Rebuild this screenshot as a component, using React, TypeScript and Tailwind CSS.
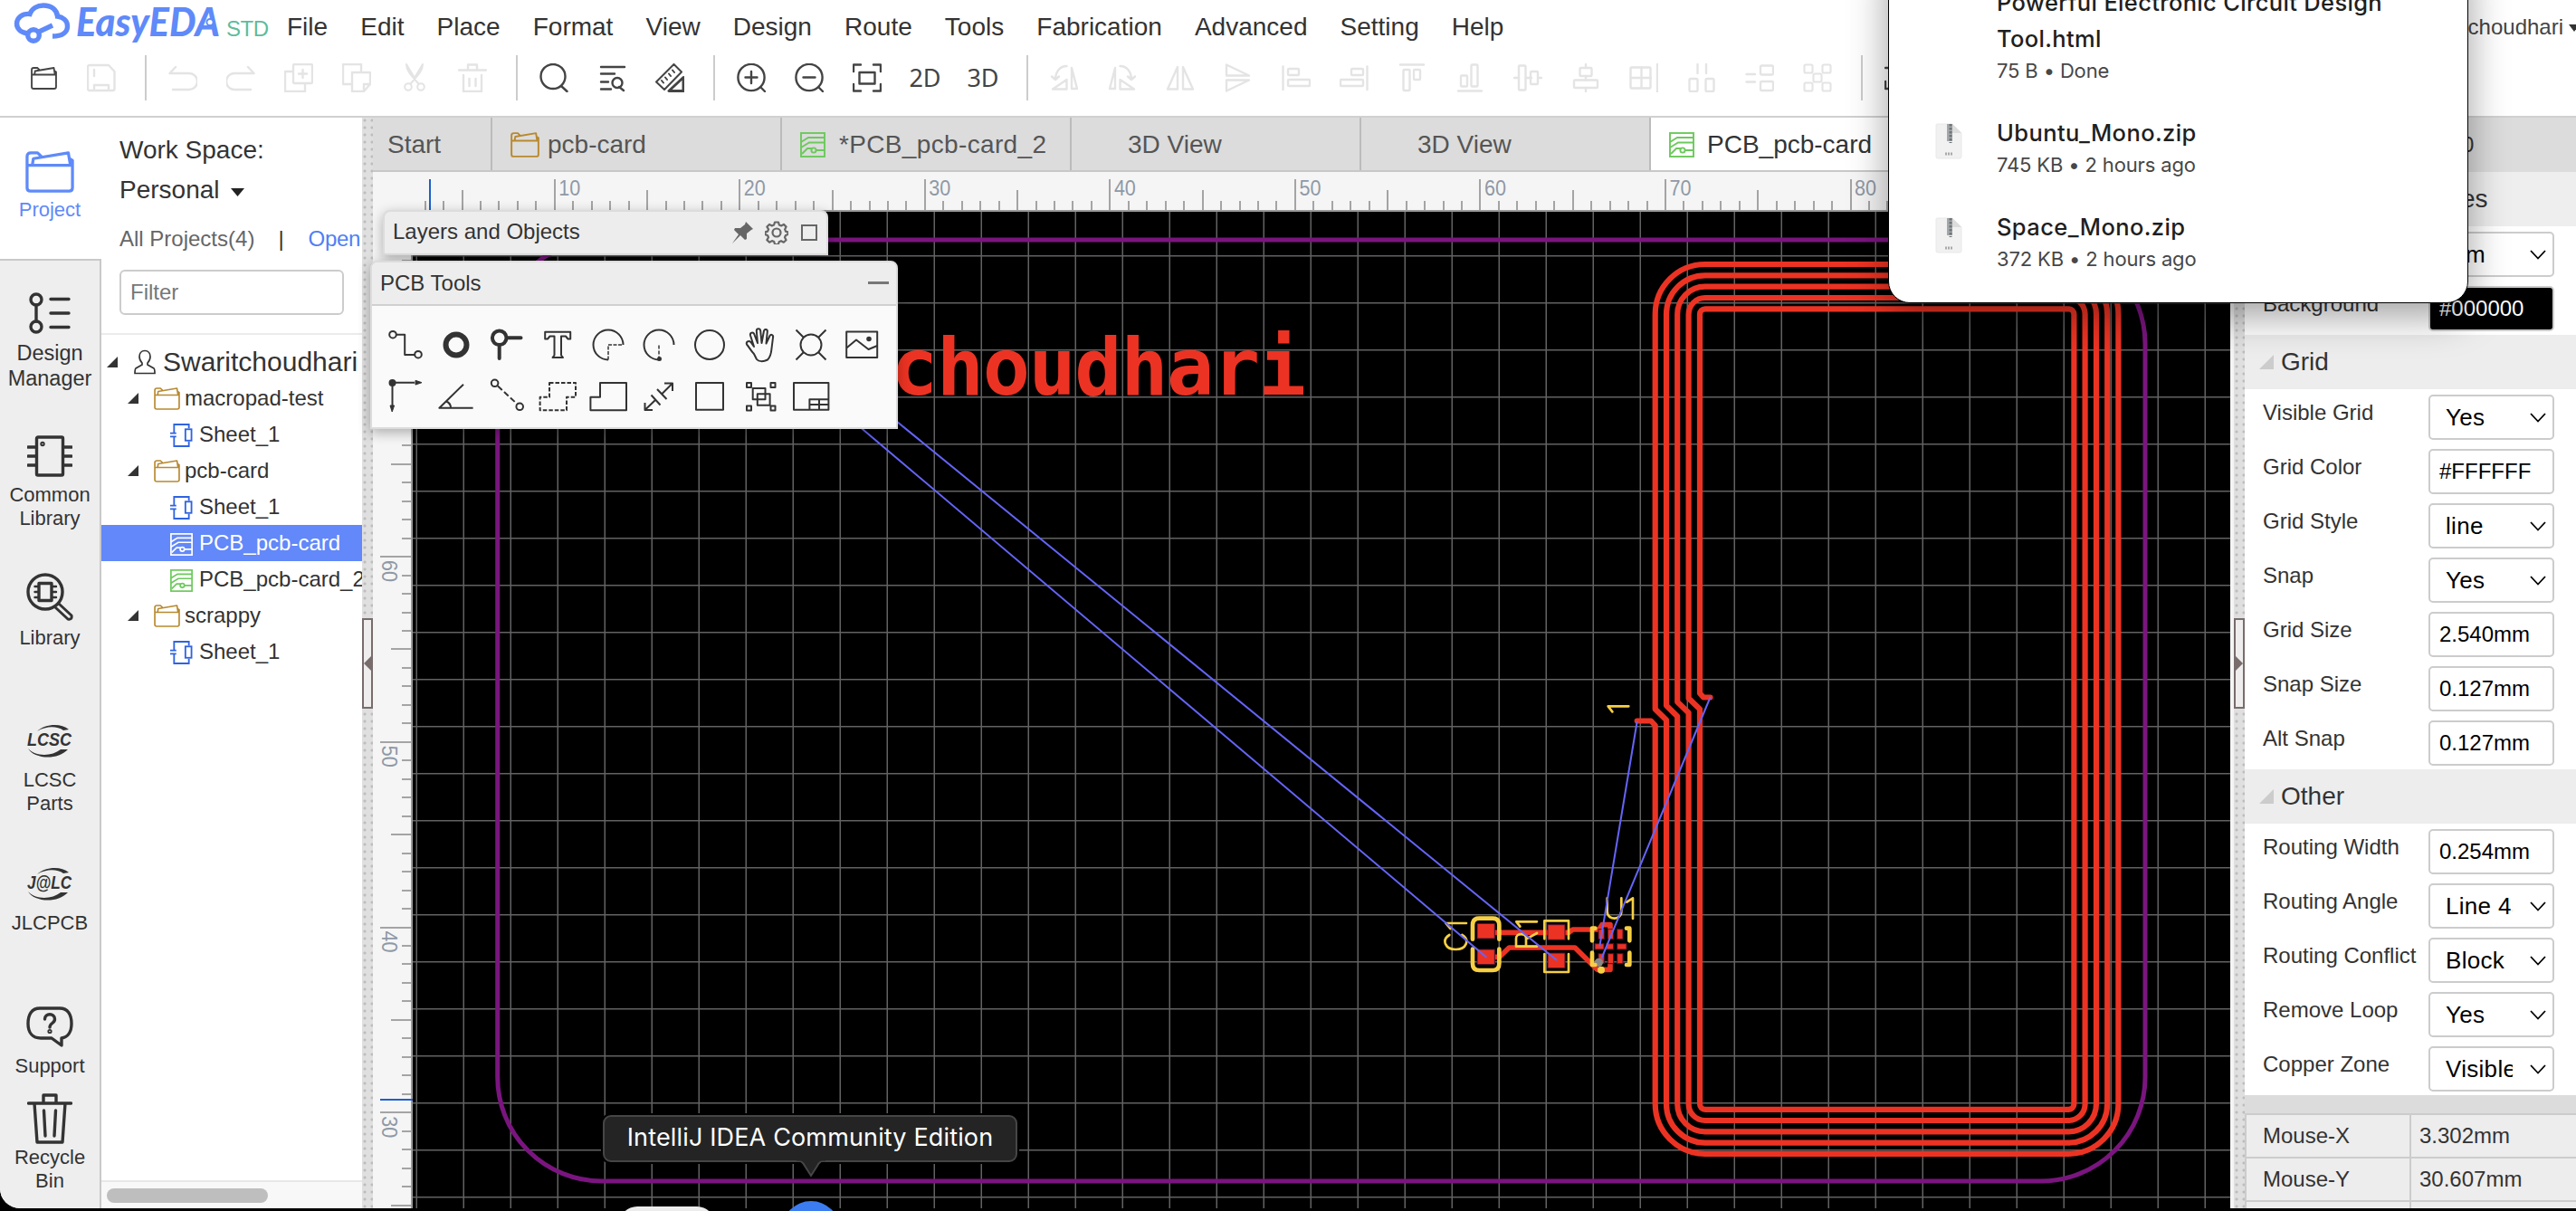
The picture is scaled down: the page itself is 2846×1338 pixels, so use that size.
import React from "react";

type IconProps = { className?: string };

const SANS = "font-['Liberation_Sans',Arial,sans-serif]";

/* ---------- shared small icons ---------- */

function Folder({ className = "", sw = 1.6 }: IconProps & { sw?: number }) {
  return (
    <svg className={className} viewBox="0 0 28 25" fill="none" stroke="currentColor" strokeWidth={sw} strokeLinejoin="round" preserveAspectRatio="none">
      <path d="M1 8.5V3.2Q1 1 3.2 1H7l2.2 2.2M1 8.5h26M4 8.3 4.6 4.5 24.6 1l1.2 7.3M25.6 4.6 27 5.6V22q0 2-2 2H3q-2 0-2-2V8.5" />
    </svg>
  );
}

function PcbIcon({ className = "" }: IconProps) {
  return (
    <svg className={className} viewBox="0 0 28 28" fill="none" stroke="currentColor" strokeWidth="1.9">
      <rect x="1" y="1" width="26" height="26" />
      <path d="M1 11 9 6H27M1 17 10 11.5H27M2 24 8 18H13M17 20H27" />
      <circle cx="15" cy="20" r="2.6" />
    </svg>
  );
}

function SheetIcon({ className = "" }: IconProps) {
  return (
    <svg className={className} viewBox="0 0 26 28" fill="none" stroke="currentColor" strokeWidth="1.9">
      <path d="M4.500 9V1.500H21.500V6M4.500 18.500V26.500H21.500V21M0 11.500H7M0 15.500H7M4.500 9V11.500M4.500 15.500V19" />
      <rect x="17.500" y="7" width="7" height="13" />
    </svg>
  );
}

function Caret({ className = "" }: IconProps) {
  return (
    <svg className={className} viewBox="0 0 12 12" fill="currentColor">
      <path d="M0 12H12V0Z" />
    </svg>
  );
}

/* ---------- header ---------- */

function Logo() {
  return (
    <svg className="absolute left-0 top-0" width="310" height="56" viewBox="0 0 310 56" fill="none">
      <g stroke="#5f8af9" strokeWidth="5.4" strokeLinecap="butt">
        <path d="M31 37C23 36 18.500 32 18.500 26c0-6 6-11.500 14.500-10.500C35 9.500 41 6 48 6c9 0 15 5 15.500 12 6 .8 11 4.600 11 11 0 6-5 11-16.500 11" />
        <circle cx="37" cy="39" r="6.300" />
        <path d="M41 36 58 28" />
      </g>
      <text x="84" y="40" fill="#5f8af9" fontFamily="Lato, sans-serif" fontWeight="900" fontStyle="italic" fontSize="43" textLength="159" lengthAdjust="spacingAndGlyphs">
        EasyEDA
      </text>
      <circle cx="232" cy="24.500" r="3.600" fill="#fff" stroke="#5f8af9" strokeWidth="2" />
      <text x="250" y="40" fill="#5cbd9b" fontFamily="'Liberation Sans', sans-serif" fontSize="24" textLength="47">
        STD
      </text>
    </svg>
  );
}

const MENU = ["File", "Edit", "Place", "Format", "View", "Design", "Route", "Tools", "Fabrication", "Advanced", "Setting", "Help"];

function Tool({ children, dim = false, w = 2.4 }: { children: React.ReactNode; dim?: boolean; w?: number }) {
  return (
    <div className={"flex w-[64px] shrink-0 items-center justify-center " + (dim ? "text-[#e4e4e4]" : "text-[#444]")}>
      <svg width="32" height="32" viewBox="0 0 32 32" fill="none" stroke="currentColor" strokeWidth={w} strokeLinecap="round" strokeLinejoin="round">
        {children}
      </svg>
    </div>
  );
}

function Sep() {
  return (
    <div className="h-[50px] w-[26px] shrink-0 pl-[16px]">
      <div className="h-full w-[2px] bg-[#ccc]" />
    </div>
  );
}

function Toolbar() {
  return (
    <div className="flex h-[56px] items-center overflow-hidden pl-[16px]">
      <div className="flex w-[64px] justify-center text-[#444]">
        <Folder className="h-[25px] w-[29px]" sw={1.8} />
      </div>
      <Tool dim>
        <path d="M3 2H24L30.500 9V28q0 2-2 2H3q-2 0-2-2V4q0-2 2-2ZM8 7v7M8 30V24H24v6" />
      </Tool>
      <Sep />
      <Tool dim><path d="M8 4 1.500 11H23a9 9 0 0 1 0 18H5" /></Tool>
      <Tool dim><path d="M24 4l6.500 7H9a9 9 0 0 0 0 18H27" /></Tool>
      <Tool dim>
        <rect x="10" y="1" width="21" height="21" rx="1.500" />
        <path d="M9 9H1V31H23V23M20.500 7v9M16 11.500h9" />
      </Tool>
      <Tool dim>
        <path d="M10 23H1V1H21V9M11 10H31V23L24 31H11ZM24 31V23H31" />
      </Tool>
      <Tool dim w={2}>
        <path d="M7 1C7 8 12 13 20 22M25 1C25 8 20 13 12 22M7 1l9 15M25 1 16 16" />
        <circle cx="9" cy="26" r="3.800" />
        <circle cx="23" cy="26" r="3.800" />
      </Tool>
      <Tool dim>
        <path d="M1 7.500H31M11 7V1.500H21V7M6 13V31H26V13M12.500 17v8M19.500 17v8" />
      </Tool>
      <Sep />
      <Tool><circle cx="15" cy="14.500" r="13.500" /><path d="M24 25l6.500 6" /></Tool>
      <Tool>
        <path d="M4 4H30M4 11.500H19M4 20.500H12M4 28.500H15M24 26l5 4" />
        <circle cx="22" cy="21.500" r="5.500" />
      </Tool>
      <Tool w={2}>
        <path d="M1 20.500 20.500 1 29 9.500 10 29ZM7 19l2 2.500M11 15.500l2 2.500M15 11.500l2 2.500M19 7.500l2 2.500" />
        <path d="M15 30.500H31V15.500Z" strokeWidth="3" />
      </Tool>
      <Sep />
      <Tool><circle cx="16" cy="15.500" r="14.600" /><path d="M26.500 26.500 31 31M16 9v13M9.500 15.500h13" /></Tool>
      <Tool><circle cx="16" cy="15.500" r="14.600" /><path d="M26.500 26.500 31 31M9.500 15.500h13" /></Tool>
      <Tool>
        <path d="M1 9V1.500H9M23 1.500h8V9M31 23v7.500H23M9 30.500H1V23" />
        <rect x="7.500" y="10" width="17" height="12.500" />
      </Tool>
      <div className="w-[64px] text-center font-['Noto_Sans',sans-serif] text-[27px] leading-[40px] text-[#444]">2D</div>
      <div className="w-[64px] text-center font-['Noto_Sans',sans-serif] text-[27px] leading-[40px] text-[#444]">3D</div>
      <Sep />
      <Tool dim>
        <path d="M18.500 3C11 3 6.500 9 6 17M2 14.500 6 18l4-3.500M24 5v23h6ZM18.500 18v10.500H3Z" />
      </Tool>
      <Tool dim>
        <path d="M13.500 3C21 3 25.500 9 26 17M22 14.500l4 3.500 4-3.500M8 5v23H2ZM13.500 18v10.500H29Z" />
      </Tool>
      <Tool dim><path d="M13 4V28.500H2ZM19 4V28.500H30Z" /></Tool>
      <Tool dim><path d="M3 1.500V13.500H28ZM3 30.500V18.500H28Z" /></Tool>
      <Tool dim>
        <path d="M1.500 3.500V29" /><rect x="7" y="6" width="12" height="7" rx="1" /><rect x="7" y="18" width="24" height="7" rx="1" />
      </Tool>
      <Tool dim>
        <path d="M30.500 3.500V29" /><rect x="13" y="6" width="13" height="7" rx="1" /><rect x="1" y="18" width="25" height="7" rx="1" />
      </Tool>
      <Tool dim>
        <path d="M3 1.500H29" /><rect x="6.500" y="7" width="7" height="23" rx="1" /><rect x="18" y="7" width="7" height="11" rx="1" />
      </Tool>
      <Tool dim>
        <path d="M3 30.500H29" /><rect x="6" y="13.500" width="7" height="12" rx="1" /><rect x="17.500" y="1.500" width="7" height="24" rx="1" />
      </Tool>
      <Tool dim>
        <path d="M1 16H6M13.500 16H20M27 16H31" /><rect x="6" y="2.500" width="7.500" height="27" rx="1" /><rect x="19" y="9" width="8" height="14" rx="1" />
      </Tool>
      <Tool dim>
        <path d="M16 1V5M16 14V18.500M16 27V31" /><rect x="9.500" y="5" width="13" height="9" rx="1" /><rect x="3" y="18.500" width="26" height="8.500" rx="1" />
      </Tool>
      <Tool dim>
        <path d="M31 1V31M13.500 4.500V27.500M1.500 16H24" /><rect x="1.500" y="4.500" width="22" height="23" rx="1" />
      </Tool>
      <Tool dim>
        <path d="M11.500 1V11M21 1V11" /><rect x="2.500" y="17" width="9" height="14" rx="1.500" /><rect x="20.500" y="17" width="9" height="14" rx="1.500" />
      </Tool>
      <Tool dim>
        <path d="M1.500 12H11M1.500 20.500H11" /><rect x="17" y="2.500" width="14" height="10" rx="1.500" /><rect x="17" y="20" width="14" height="10" rx="1.500" />
      </Tool>
      <Tool dim w={2.1}>
        <rect x="1.500" y="1.500" width="9" height="9" rx="1.500" /><rect x="21.500" y="1.500" width="9" height="9" rx="1.500" />
        <rect x="11.500" y="11.500" width="9" height="9" rx="1.500" />
        <rect x="1.500" y="21.500" width="9" height="9" rx="1.500" /><rect x="21.500" y="21.500" width="9" height="9" rx="1.500" />
      </Tool>
      <Sep />
      <Tool><path d="M1 5H8M1 20V28H8" /></Tool>
    </div>
  );
}

/* ---------- left navigation ---------- */

function NavItem({ icon, lines, className }: { icon: React.ReactNode; lines: string[]; className: string }) {
  return (
    <div className={"flex shrink-0 flex-col items-center " + className}>
      {icon}
      {lines.map((l) => (
        <div key={l} className="whitespace-nowrap">{l}</div>
      ))}
    </div>
  );
}

function SwooshLogo({ text, className = "" }: { text: string; className?: string }) {
  return (
    <svg className={className} width="52" height="40" viewBox="0 0 52 40">
      <path d="M12 9C20 1 38-1 47 7l-6 1C34 3 22 3 12 9ZM2 28c6 11 32 14 44 1l-8 0C28 37 10 37 2 28Z" fill="#333" />
      <text x="1" y="25" textLength="49" lengthAdjust="spacingAndGlyphs" fontFamily="'Liberation Sans', sans-serif" fontWeight="bold" fontStyle="italic" fontSize="20" fill="#333">
        {text}
      </text>
    </svg>
  );
}

function LeftNav() {
  const stroke = { fill: "none", stroke: "currentColor", strokeWidth: 3.4, strokeLinejoin: "round" as const, strokeLinecap: "round" as const };
  return (
    <div className="flex w-[112px] shrink-0 flex-col bg-[#eee] text-[22px] leading-[26px] text-[#333]">
      <NavItem
        className="h-[156px] bg-white pr-[2px] pt-[37px] text-[#5f8af9]"
        lines={["Project"]}
        icon={<Folder className="mb-[6px] h-[46px] w-[54px]" sw={1.7} />}
      />
      <div className="flex flex-1 flex-col border-r-2 border-t-2 border-[#c9c9c9]">
        <NavItem
          className="h-[193px] pt-[35px] text-[23.5px] leading-[28px]"
          lines={["Design", "Manager"]}
          icon={
            <svg className="mb-[7px]" width="46" height="46" viewBox="0 0 46 46" {...stroke}>
              <circle cx="8" cy="8" r="6" /><circle cx="8" cy="38" r="6" />
              <path d="M8 14V32M24 7.500H44M24 23H44M24 38.500H44" />
            </svg>
          }
        />
        <NavItem
          className="h-[152px]"
          lines={["Common", "Library"]}
          icon={
            <svg className="mb-[7px] shrink-0" width="50" height="46" viewBox="0 0 50 46" {...stroke}>
              <rect x="10.500" y="2" width="29" height="42" rx="1.500" />
              <path d="M1 13H9M1 23H9M1 33H9M41 13H49M41 23H49M41 33H49" /><circle cx="17" cy="9.500" r="1" />
            </svg>
          }
        />
        <NavItem
          className="h-[166px]"
          lines={["Library"]}
          icon={
            <svg className="mb-[5px] shrink-0" width="52" height="54" viewBox="0 0 52 54" {...stroke}>
              <circle cx="21" cy="21" r="19" />
              <rect x="14" y="11.500" width="14" height="19" />
              <path d="M9.500 15H13M9.500 21H13M9.500 27H13M29 15H33M29 21H33M29 27H33" strokeWidth="2.400" />
              <path d="M36 34 50 47q1 5-4 4L32 38" strokeWidth="3" />
            </svg>
          }
        />
        <NavItem className="h-[158px]" lines={["LCSC", "Parts"]} icon={<SwooshLogo text="LCSC" className="mb-[10px] shrink-0" />} />
        <NavItem className="h-[155px]" lines={["JLCPCB"]} icon={<SwooshLogo text="J@LC" className="mb-[10px] shrink-0" />} />
        <NavItem
          className="h-[96px]"
          lines={["Support"]}
          icon={
            <svg className="mb-[7px] shrink-0" width="52" height="46" viewBox="0 0 52 46" {...stroke}>
              <path d="M39 43V35C46 34 50 28 50 19 50 9 46 2 37 2H15C6 2 2 9 2 19s5 16 14 16H28Z" />
              <path d="M20.500 14c0-7 11-7 11 0 0 5-5.500 4-5.500 9" /><circle cx="26" cy="27.500" r=".9" />
            </svg>
          }
        />
        <NavItem
          className=""
          lines={["Recycle", "Bin"]}
          icon={
            <svg className="mb-[2px] shrink-0" width="50" height="56" viewBox="0 0 50 56" {...stroke}>
              <path d="M1.500 11H48.500M18 10V2H32V10M8 11 11 54H39L42 11M18.500 19 20 47M31.500 19 30 47" />
            </svg>
          }
        />
      </div>
    </div>
  );
}

/* ---------- project tree ---------- */

function FolderRow({ name }: { name: string }) {
  return (
    <div className="flex h-[40px] items-center pb-px pl-[29px]">
      <Caret className="h-[12px] w-[12px] text-[#333]" />
      <Folder className="ml-[17px] mt-[2px] h-[25px] w-[29px] text-[#b8892f]" />
      <span className="ml-[5px]">{name}</span>
    </div>
  );
}

function FileRow({ name, kind, selected = false }: { name: string; kind: "sheet" | "pcb"; selected?: boolean }) {
  return (
    <div className={"flex h-[40px] items-center whitespace-nowrap pb-px pl-[76px] " + (selected ? "bg-[#6288f9] text-white" : "")}>
      {kind === "sheet" ? (
        <SheetIcon className="mt-[3px] h-[28px] w-[25px] shrink-0 text-[#2f63e0]" />
      ) : (
        <PcbIcon className={"mt-[3px] h-[25px] w-[25px] shrink-0 " + (selected ? "text-white" : "text-[#6cc95c]")} />
      )}
      <span className="ml-[7px]">{name}</span>
    </div>
  );
}

function ProjectPanel() {
  return (
    <div className="flex w-[288px] shrink-0 flex-col overflow-hidden bg-white text-[24px] text-[#333]">
      <div className="mt-[14px] pl-[20px] text-[28px] leading-[44px]">Work Space:</div>
      <div className="flex items-center pl-[20px] text-[28px] leading-[44px]">
        Personal
        <svg className="ml-[12px] mt-[5px]" width="15" height="9" viewBox="0 0 15 9"><path d="M0 0H15L7.500 9Z" fill="#222" /></svg>
      </div>
      <div className="mt-[17px] flex whitespace-nowrap pl-[20px] leading-[30px] text-[#666]">
        All Projects(4)
        <span className="ml-[26px] text-[#333]">|</span>
        <span className="ml-[27px] tracking-[-0.3px] text-[#4f80f5]">Open</span>
      </div>
      <div className="ml-[20px] mt-[19px] flex h-[50px] w-[248px] shrink-0 items-center rounded-[6px] border-2 border-[#ccc] pl-[10px] text-[#777]">Filter</div>
      <div className="mt-[20px] h-[2px] shrink-0 bg-[#ebebeb]" />
      <div className="mt-[10px]">
        <div className="flex h-[40px] items-center whitespace-nowrap pb-px pl-[6px] text-[30px]">
          <Caret className="h-[12px] w-[12px] shrink-0" />
          <svg className="ml-[18px] shrink-0" width="24" height="28" viewBox="0 0 24 28" fill="none" stroke="#333" strokeWidth="1.700">
            <path d="M12 1.500c4 0 6 3 6 6.500 0 3-1.500 5.500-3 7v2l7 4q1 1 1 5.500H1q0-4.500 1-5.500l7-4V15C7.500 13.500 6 11 6 8c0-3.500 2-6.500 6-6.500Z" />
          </svg>
          <span className="ml-[8px]">Swaritchoudhari</span>
        </div>
        <FolderRow name="macropad-test" />
        <FileRow name="Sheet_1" kind="sheet" />
        <FolderRow name="pcb-card" />
        <FileRow name="Sheet_1" kind="sheet" />
        <FileRow name="PCB_pcb-card" kind="pcb" selected />
        <FileRow name="PCB_pcb-card_2" kind="pcb" />
        <FolderRow name="scrappy" />
        <FileRow name="Sheet_1" kind="sheet" />
      </div>
      <div className="mt-auto flex h-[31px] items-center border-t-2 border-[#e8e8e8] bg-[#f8f8f8] pl-[6px]">
        <div className="h-[16px] w-[178px] rounded-full bg-[#bebebe]" />
      </div>
    </div>
  );
}

function Splitter({ dir }: { dir: "left" | "right" }) {
  return (
    <div className="flex w-[12px] shrink-0 flex-col bg-[#dfdfdf] bg-[radial-gradient(circle_at_3px_3px,#bdbdbd_1.3px,transparent_1.8px)] bg-[size:8px_8px] pt-[553px]">
      <div className="flex h-[100px] w-[12px] items-center justify-center border-2 border-[#786c6c] bg-[#efeded]">
        <svg width="8" height="16" viewBox="0 0 8 16" className="shrink-0">
          <path d={dir === "left" ? "M8 0V16L0 8Z" : "M0 0V16L8 8Z"} fill="#786c6c" />
        </svg>
      </div>
    </div>
  );
}

/* ---------- tabs, rulers, canvas ---------- */

function Tabs() {
  const base = "flex h-full w-[320px] shrink-0 items-center border-r-2 border-[#bbb] pl-[20px] pt-px text-[#555]";
  return (
    <div className="flex h-[60px] shrink-0 border-b-2 border-[#c8c8c8] bg-[#dcdcdc] text-[28px]">
      <div className="flex h-full w-[132px] shrink-0 items-center border-r-2 border-[#bbb] pl-[16px] pt-px text-[#555]">Start</div>
      <div className={base}><Folder className="mr-[9px] h-[28px] w-[32px] text-[#b8892f]" sw={1.7} />pcb-card</div>
      <div className={base}><PcbIcon className="mr-[15px] h-[28px] w-[28px] text-[#6cc95c]" /><span className="tracking-[0.35px]">*PCB_pcb-card_2</span></div>
      <div className={base}><span className="ml-[42px]">3D View</span></div>
      <div className={base}><span className="ml-[42px]">3D View</span></div>
      <div className="flex h-full w-[642px] items-center bg-white pl-[20px] pt-px text-[#333]">
        <PcbIcon className="mr-[14px] h-[28px] w-[28px] text-[#6cc95c]" />PCB_pcb-card
      </div>
    </div>
  );
}

const hx = (v: number) => 612.8 + (v - 10) * 20.453;
const vy = (v: number) => 1229.2 - (v - 30) * 20.47;

function HRuler() {
  const vals = Array.from({ length: 97 }, (_, i) => i + 3);
  return (
    <svg className="block shrink-0" width="2052" height="44" viewBox="412 190 2052 44">
      <rect x="412" y="190" width="2052" height="44" fill="#f5f5f5" />
      {vals.map((v) => (
        <rect key={v} x={Math.round(hx(v)) - 1} y={v % 10 === 0 ? 198 : v % 5 === 0 ? 210 : 222} width="2" height={v % 10 === 0 ? 34 : v % 5 === 0 ? 22 : 10} fill="#a4a4a4" />
      ))}
      {vals.filter((v) => v % 10 === 0).map((v) => (
        <text key={v} x={hx(v) + 4.5} y="216" fontSize="23" fill="#8f99a6" fontFamily="'Liberation Sans', sans-serif" textLength="24" lengthAdjust="spacingAndGlyphs">{v}</text>
      ))}
      <rect x="456" y="232" width="2008" height="2" fill="#999" />
      <rect x="474" y="198" width="2" height="34" fill="#1d5fcb" />
    </svg>
  );
}

function VRuler() {
  const vals = Array.from({ length: 53 }, (_, i) => i + 25);
  return (
    <svg className="block shrink-0" width="44" height="1101" viewBox="412 234 44 1101">
      <rect x="412" y="234" width="44" height="1101" fill="#f5f5f5" />
      {vals.map((v) => {
        const len = v % 10 === 0 ? 34 : v % 5 === 0 ? 22 : 10;
        return <rect key={v} x={454 - len} y={Math.round(vy(v)) - 1} width={len} height="2" fill="#a4a4a4" />;
      })}
      {[30, 40, 50, 60, 70].map((v) => (
        <text key={v} transform={`translate(422 ${vy(v) + 4}) rotate(90)`} fontSize="23" fill="#8f99a6" fontFamily="'Liberation Sans', sans-serif" textLength="24" lengthAdjust="spacingAndGlyphs">{v}</text>
      ))}
      <rect x="454" y="234" width="2" height="1101" fill="#999" />
      <rect x="420" y="1214" width="36" height="2" fill="#1d5fcb" />
    </svg>
  );
}

const COIL = (() => {
  const L = [1828.7, 1841, 1853.2, 1865.6, 1878];
  const R = [2340.4, 2328.2, 2316, 2303.6, 2291.4];
  const T = [292, 304.3, 316.7, 329, 341.3];
  const B = [1274.8, 1262.6, 1250.3, 1238, 1225.8];
  let d = "M1808.7 796.5H1824L1828.7 801.5";
  for (let i = 0; i < 5; i++) {
    const r = 6 + (4 - i) * 12.3;
    d += `V${B[i] - r}A${r} ${r} 0 0 0 ${L[i] + r} ${B[i]}H${R[i] - r}A${r} ${r} 0 0 0 ${R[i]} ${B[i] - r}V${T[i] + r}A${r} ${r} 0 0 0 ${R[i] - r} ${T[i]}H${L[i] + r}A${r} ${r} 0 0 0 ${L[i]} ${T[i] + r}`;
    if (i < 4) d += `V${783.5 - i * 4}L${L[i + 1]} ${795.5 - i * 4}`;
  }
  return d + "V766L1882 770.5H1889.500";
})();

function Board() {
  return (
    <svg className="block shrink-0 bg-black" width="2008" height="1101" viewBox="456 234 2008 1101" fill="none">
      <g fill="#626262">
        {Array.from({ length: 39 }, (_, i) => <rect key={i} x={459.5 + i * 52} y="234" width="1.500" height="1101" />)}
        {Array.from({ length: 21 }, (_, i) => <rect key={i} x="456" y={282 + i * 52} width="2008" height="1.500" />)}
      </g>
      <rect x="549.700" y="265" width="1820.300" height="1040" rx="115" stroke="#7a157f" strokeWidth="5" />
      <path d={COIL} stroke="#ec3323" strokeWidth="6.200" strokeLinecap="round" strokeLinejoin="round" />
      <text x="984" y="436.700" transform="translate(0 -1)" fill="#ec3323" fontFamily="'DejaVu Sans Mono', monospace" fontWeight="bold" fontSize="87" textLength="459">choudhari</text>
      <g transform="translate(1560 740) scale(.33333)">
        <path d="M245 871H520L533 861H620L630 845H657V880M245 952H290L322 921H540L614 994H657V960" stroke="#ec3323" strokeWidth="17" strokeLinejoin="round" />
        <g fill="#ec3323" stroke="#4a1030" strokeWidth="3">
          <rect x="216" y="841" width="58" height="50" /><rect x="216" y="927" width="58" height="50" />
          <rect x="450" y="845" width="57" height="50" /><rect x="450" y="939" width="57" height="50" />
          {[860, 941].map((y) => [618, 649, 680].map((x) => <rect key={x + "-" + y} x={x} y={y} width="19" height="33" />))}
          <rect x="606" y="908" width="30" height="19" /><rect x="644" y="908" width="24" height="19" /><rect x="680" y="908" width="31" height="19" />
        </g>
        <circle cx="619" cy="970" r="14" fill="#888" />
        <g stroke="#f6cf45" strokeLinecap="round" strokeLinejoin="round">
          <path d="M201 893V846Q201 824 223 824H267Q289 824 289 846V893M201 926V974Q201 996 223 996H267Q289 996 289 974V926" strokeWidth="14" />
          <path d="M439 892V832H519V892M439 942V1002H519V942" strokeWidth="8" />
          <path d="M597 898V857H607M721 898V857H711M597 938V978H607M721 938V978H711" strokeWidth="14" />
          <path d="M124 879C97 896 110 927 145 927S193 896 166 879M180 840H112L127 858M345 917H414M345 917V890C345 872 378 872 378 890V917M378 893 414 873M414 835H346L358 851M647 757V800C647 832 694 832 694 800V757M732 825V757L712 770M718 121H650L664 139" strokeWidth="8" />
        </g>
        <circle cx="627" cy="995" r="12" fill="#f6cf45" />
      </g>
      <path d="M920 446.300 1642.300 1057.700M920 407.900 1720 1061M1808.700 797 1767.300 1045.700M1889.700 770 1769.300 1059" stroke="#6464f8" strokeWidth="2" />
    </svg>
  );
}

/* ---------- floating palettes ---------- */

function LayersPanel() {
  return (
    <div className="absolute left-[423px] top-[232px] flex h-[50px] w-[492px] items-center rounded-t-[8px] border-2 border-[#dcdcdc] bg-[#ededed] pl-[9px] pr-[10px] text-[24px] text-[#333] shadow-[0_4px_14px_rgba(0,0,0,0.3)]">
      <span className="pb-[2px]">Layers and Objects</span>
      <svg className="ml-auto" width="24" height="24" viewBox="0 0 24 24" fill="#666"><path d="M16 0 24 8l-2 1-5 4 0 6-2 1-5-5L1 24l7-10L3 9l1-2 6 0 5-4Z" /></svg>
      <svg className="ml-[13px]" width="26" height="26" viewBox="0 0 26 26" fill="none" stroke="#666" strokeWidth="2.200" strokeLinejoin="round">
        <path d="M11 1.500h4l.8 3 2.400 1 2.700-1.600 2.700 2.700-1.500 2.800 1 2.300 2.400.7v2.600l-2.500 1-1 2.300 1.500 2.900-2.700 2.500-2.800-1.500-2.300 1-.8 2.800h-3.800l-.9-2.900-2.300-1-2.800 1.600-2.700-2.600 1.600-2.800-1-2.300-2.500-.9v-2.700l2.600-.8 1-2.300-1.700-2.700L5 3.900l2.800 1.600 2.300-1Z" />
        <circle cx="13" cy="13" r="4.500" />
      </svg>
      <div className="ml-[14px] h-[18px] w-[18px] border-2 border-[#666]" />
    </div>
  );
}

function P({ children, w = 2 }: { children: React.ReactNode; w?: number }) {
  return (
    <svg className="w-[56px] overflow-visible" height="40" viewBox="0 0 40 40" fill="none" stroke="#333" strokeWidth={w} strokeLinejoin="round">
      {children}
    </svg>
  );
}

function PcbTools() {
  return (
    <div className="absolute left-[409px] top-[288px] h-[186px] w-[583px] overflow-hidden rounded-t-[8px] border-2 border-[#dcdcdc] bg-[#fafafa] text-[24px] text-[#333] shadow-[0_4px_14px_rgba(0,0,0,0.3)]">
      <div className="flex h-[48px] items-center justify-between border-b-2 border-[#d0d0d0] bg-[#ededed] pb-px pl-[9px] pr-[8px]">
        <span>PCB Tools</span>
        <div className="h-[2.500px] w-[23px] bg-[#777]" />
      </div>
      <div className="ml-[9px] mt-[23px] grid w-[560px] grid-cols-10 gap-y-[17px]">
        <P><circle cx="6" cy="8.700" r="3.800" /><path d="M10 8.700H19.200V31H30" /><circle cx="34" cy="30.700" r="3.800" /></P>
        <P w={6}><circle cx="20" cy="20" r="11.500" /></P>
        <P w={4}><circle cx="11.700" cy="12.300" r="7.800" /><path d="M20 12.300H35.500M11.700 20.500V35" strokeLinecap="round" /></P>
        <P><path d="M6.200 5.700H34.200V13.500H31.500L29 10.500H24V31.500L26 34H14.500L16.500 31.500V10.500H11.500L9 13.500H6.200Z" /></P>
        <P><path d="M36.500 20A16.500 16.500 0 1 0 20 36.500" /><path d="M20 36.500V20H36.500" strokeDasharray="4 1.500" strokeWidth="1.500" /></P>
        <P><path d="M36.500 20A16.500 16.500 0 1 0 20 36.500" /><path d="M20 36.500V20" strokeDasharray="4 2" strokeWidth="1.500" /><circle cx="20.500" cy="35.500" r="1.500" fill="#333" /></P>
        <P><circle cx="20" cy="20" r="16" /></P>
        <P>
          <path d="M13 30C10 27 8 23 5 19.500 4 17 7 14.500 9.500 17L13 22 9 9.500C8.300 6.500 12 5.200 13.200 8L17 18 15.800 4.500C16 1.500 19.700 1.300 20.200 4.500L21.500 18 24 4.500C24.800 2 28.200 2.700 27.800 5.500L26.500 18.500 30.500 10C31.800 7.800 34.800 9 34 12L32.500 24C32 31 30.500 34 28 36.500 23 39 18 38.500 16 36Z" />
        </P>
        <P><circle cx="20" cy="20" r="11.500" /><path d="M3.500 3.500 12 12M36.500 3.500 28 12M3.500 36.500 12 28M36.500 36.500 28 28" /></P>
        <P><rect x="3.200" y="5.500" width="34" height="28.500" /><path d="M3.200 23.500 14 14.500 27.500 25 37.200 21" /><circle cx="28" cy="13.500" r="1.800" fill="#333" /></P>

        <P><path d="M5.500 5V30M5.500 4.800H30" /><circle cx="5.500" cy="5" r="3" fill="#333" /><path d="M31 2.300 38 4.700 31 7.100ZM3 30 5.200 37 7.600 30Z" fill="#333" strokeWidth="1" /></P>
        <P><path d="M28 6.700 1.400 32.700H38.600M9 25.500Q14 27.500 14 32.500" /></P>
        <P><circle cx="6.600" cy="5.300" r="3.800" /><circle cx="34.200" cy="31.300" r="3.800" /><path d="M10 8.500 31.500 28.500" strokeDasharray="6.500 3" /></P>
        <P><path d="M11 5H40V20.700H30V35.300H.6V20.700H11Z" strokeDasharray="4.500 2" /></P>
        <P><path d="M11 5H40V35.300H.4V20.700H11Z" /></P>
        <P><path d="M4.500 35 16 24M23.500 17 35 5.500M26 5.500H35V14M4.500 27V35H13M11.500 18.500 21.500 29.500M18 12 28.500 23" /></P>
        <P><rect x="5" y="5" width="30" height="29.700" /></P>
        <P>
          <rect x="11.700" y="11" width="13.800" height="12.300" /><rect x="16.800" y="17.300" width="13.800" height="12.400" />
          <path d="M5 5H10V10H5ZM31.500 5H36.500V10H31.500ZM5 30.500H10V35.500H5ZM31.500 30.500H36.500V35.500H31.500Z" />
        </P>
        <P><rect x="1" y="5" width="38.400" height="29.700" /><path d="M18.400 34.700V23.300H39.400M18.400 29H39.400M29 23.300V34.700" /></P>
      </div>
    </div>
  );
}

/* ---------- right properties panel ---------- */

function Row({ label, value, select = false, dark = false }: { label: string; value: string; select?: boolean; dark?: boolean }) {
  return (
    <div className="flex h-[60px] shrink-0 items-start pl-[20px]">
      <div className="w-[183px] whitespace-nowrap pt-[11px] leading-[30px]">{label}</div>
      <div className={"mt-[6px] flex h-[50px] w-[139px] items-center rounded-[5px] border-2 border-[#ccc] " + (dark ? "bg-black text-white" : "bg-white text-black")}>
        {select ? (
          <>
            <span className="ml-[17px] w-[74px] overflow-hidden whitespace-nowrap text-[26px] tracking-[0.3px]">{value}</span>
            <svg className="ml-[19px] shrink-0" width="18" height="11" viewBox="0 0 18 11" fill="none" stroke="#000" strokeWidth="1.800"><path d="M1 1 9 9.500 17 1" /></svg>
          </>
        ) : (
          <span className="ml-[10px] pb-px">{value}</span>
        )}
      </div>
    </div>
  );
}

function Section({ title }: { title: string }) {
  return (
    <div className="flex h-[60px] shrink-0 items-center bg-[#ededed] pl-[16px] text-[28px]">
      <Caret className="mr-[8px] h-[16px] w-[16px] text-[#ccc]" />
      {title}
    </div>
  );
}

function MouseRow({ label, value }: { label: string; value: string }) {
  return (
    <div className="flex h-[48px] items-center border-t-2 border-[#ccc]">
      <div className="flex h-full w-[182px] items-center border-r-2 border-[#ccc] pb-px pl-[18px]">{label}</div>
      <div className="pb-px pl-[9px]">{value}</div>
    </div>
  );
}

function Properties() {
  return (
    <div className="flex w-[366px] shrink-0 flex-col overflow-hidden bg-white text-[24px] text-[#333]">
      <div className="flex h-[60px] shrink-0 items-center bg-[#dcdcdc] pl-[140px] text-[24px]">Selected 0</div>
      <div className="flex h-[60px] shrink-0 items-center bg-[#eee] pl-[49px] text-[28px]">Canvas Attributes</div>
      <Row label="Units" value="mm" select />
      <Row label="Background" value="#000000" dark />
      <Section title="Grid" />
      <Row label="Visible Grid" value="Yes" select />
      <Row label="Grid Color" value="#FFFFFF" />
      <Row label="Grid Style" value="line" select />
      <Row label="Snap" value="Yes" select />
      <Row label="Grid Size" value="2.540mm" />
      <Row label="Snap Size" value="0.127mm" />
      <Row label="Alt Snap" value="0.127mm" />
      <Section title="Other" />
      <Row label="Routing Width" value="0.254mm" />
      <Row label="Routing Angle" value="Line 45°" select />
      <Row label="Routing Conflict" value="Block" select />
      <Row label="Remove Loop" value="Yes" select />
      <Row label="Copper Zone" value="Visible" select />
      <div className="h-[20px] shrink-0 bg-[#dcdcdc]" />
      <div className="min-h-0 flex-1 overflow-hidden border-l-2 border-[#ccc] bg-[#ededed]">
        <MouseRow label="Mouse-X" value="3.302mm" />
        <MouseRow label="Mouse-Y" value="30.607mm" />
        <MouseRow label="" value="" />
      </div>
    </div>
  );
}

/* ---------- overlays ---------- */

function ZipIcon() {
  return (
    <svg width="32" height="40" viewBox="0 0 32 40" className="mt-[9px] shrink-0">
      <path d="M3 1H20L30 11V37q0 2-2 2H4q-2 0-2-2V3q0-2 1-2Z" fill="#f1f1f1" stroke="#e9e9e9" />
      <path d="M20 1V11H30Z" fill="#dcdcdc" />
      <path d="M14 1h6v19h-6Z" fill="#a4a8aa" />
      <path d="M18 1V22" stroke="#6f7476" strokeWidth="3" strokeDasharray="2.500 1.500" />
      <path d="M12 34h9" stroke="#aaa" strokeWidth="3" strokeDasharray="2 1" />
    </svg>
  );
}

function Download({ name, meta }: { name: string; meta: string }) {
  return (
    <div className="flex h-[104px] pl-[50px]">
      <ZipIcon />
      <div className="ml-[37px]">
        <div className="text-[25.5px] font-medium leading-[40px] tracking-[0.4px] text-[#1f1f1f]">{name}</div>
        <div className="-mt-px text-[22px] leading-[32px] tracking-[-0.15px] text-[#474747]">{meta}</div>
      </div>
    </div>
  );
}

function Downloads() {
  return (
    <div className="absolute left-[2086px] top-[-60px] h-[395px] w-[641px] overflow-visible rounded-[24px] border border-black bg-white font-['Inter',sans-serif] shadow-[0_14px_44px_rgba(0,0,0,0.38)]">
      <div className="mt-[42px] h-[144px] pl-[119px]">
        <div className="whitespace-nowrap text-[25.5px] font-medium leading-[40px] tracking-[0.33px] text-[#1f1f1f]">
          Powerful Electronic Circuit Design<br />Tool.html
        </div>
        <div className="-mt-px text-[22px] leading-[32px] tracking-[-0.15px] text-[#474747]">75 B • Done</div>
      </div>
      <Download name="Ubuntu_Mono.zip" meta="745 KB • 2 hours ago" />
      <Download name="Space_Mono.zip" meta="372 KB • 2 hours ago" />
    </div>
  );
}

function DockTooltip() {
  return (
    <>
      <div className="absolute left-[666px] top-[1232px] flex h-[52px] w-[458px] items-center justify-center whitespace-nowrap rounded-[9px] border-2 border-[#464646] bg-[#242424] pb-[2px] font-['Inter',sans-serif] text-[27px] tracking-[0.15px] text-white ring-2 ring-black">
        IntelliJ IDEA Community Edition
      </div>
      <svg className="absolute left-[876px] top-[1281px]" width="40" height="20" viewBox="0 0 40 20">
        <path d="M4 1Q10 1 13 7L20 18 27 7Q30 1 36 1" fill="#242424" stroke="#464646" strokeWidth="2" />
        <rect x="4" y="0" width="32" height="1.500" fill="#242424" />
      </svg>
      <div className="absolute left-[684px] top-[1333px] h-[60px] w-[106px] rounded-[20px] bg-[#ececec]" />
      <div className="absolute left-[864px] top-[1327px] h-[64px] w-[64px] rounded-full bg-[#3b7df0]" />
    </>
  );
}

export default function App() {
  return (
    <div className={"relative h-[1338px] w-[2846px] overflow-hidden bg-black " + SANS}>
      <div className="flex h-[1335px] w-full flex-col overflow-hidden rounded-bl-[22px] bg-white">
        <div className="relative h-[130px] shrink-0 border-b-2 border-[#d0d0d0] bg-white">
          <Logo />
          <div className="flex h-[58px] items-center gap-[36.1px] pl-[317px] pt-px text-[28px] text-[#333]">
            {MENU.map((m) => <span key={m}>{m}</span>)}
            <span className="ml-auto flex items-center text-[24px] text-[#444]">
              Swaritchoudhari
              <svg className="ml-[6px] mt-[3px]" width="8" height="8" viewBox="0 0 8 8"><path d="M0 0H12L6 8Z" fill="#333" /></svg>
            </span>
          </div>
          <Toolbar />
        </div>
        <div className="flex min-h-0 flex-1">
          <LeftNav />
          <ProjectPanel />
          <Splitter dir="left" />
          <div className="flex w-[2052px] shrink-0 flex-col overflow-hidden">
            <Tabs />
            <HRuler />
            <div className="flex">
              <VRuler />
              <Board />
            </div>
          </div>
          <div className="w-[4px] shrink-0 bg-[#f4f4f4]" />
          <Splitter dir="right" />
          <Properties />
        </div>
      </div>
      <LayersPanel />
      <PcbTools />
      <Downloads />
      <DockTooltip />
    </div>
  );
}
